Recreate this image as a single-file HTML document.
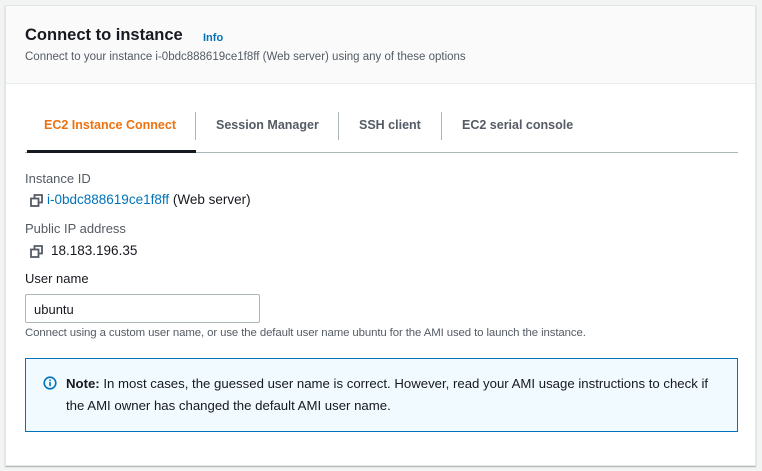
<!DOCTYPE html>
<html><head><style>
*{margin:0;padding:0;box-sizing:border-box}
body{width:762px;height:471px;background:#f2f3f3;font-family:"Liberation Sans",sans-serif;color:#16191f;position:relative;overflow:hidden}
.card{position:absolute;left:5px;top:5px;width:751px;height:461px;background:#fff;border:1px solid #e4e6e6;box-shadow:0 1px 1px rgba(0,28,36,.3)}
.hdr{position:absolute;left:0;top:0;width:100%;height:78px;background:#fafafa;border-bottom:1px solid #eaeded}
.a{position:absolute;white-space:nowrap}
.t{font-size:16.5px;font-weight:bold;left:19px;top:20px}
.info{font-size:11px;font-weight:bold;color:#0073bb;left:197px;top:26px}
.sub{font-size:11.5px;color:#545b64;left:19px;top:45px}
.tab{font-size:12.5px;font-weight:bold;color:#545b64;top:112px}
.sep{position:absolute;width:1px;height:28px;background:#aab7b8;top:106px}
.lbl{font-size:13px;color:#545b64;left:19px}
.val{font-size:13.5px;left:41px}
.ic{position:absolute;left:24px;width:13px;height:13px}
</style></head><body>
<div class="card">
<div class="hdr"></div>
<div class="a t">Connect to instance</div>
<div class="a info">Info</div>
<div class="a sub">Connect to your instance i-0bdc888619ce1f8ff (Web server) using any of these options</div>
<div class="a tab" style="left:38px;color:#ec7211">EC2 Instance Connect</div>
<div class="sep" style="left:189px"></div>
<div class="a tab" style="left:210px">Session Manager</div>
<div class="sep" style="left:332px"></div>
<div class="a tab" style="left:353px">SSH client</div>
<div class="sep" style="left:435px"></div>
<div class="a tab" style="left:456px">EC2 serial console</div>
<div style="position:absolute;left:19px;top:146px;width:713px;height:1px;background:#aab7b8"></div>
<div style="position:absolute;left:21px;top:144px;width:169px;height:3px;background:#16191f"></div>
<div class="a lbl" style="top:165px">Instance ID</div>
<svg class="ic" style="top:188px" viewBox="0 0 13 13"><rect x="1" y="4.5" width="7.5" height="7.5" fill="none" stroke="#545b64" stroke-width="1.8"/><path d="M4.5 4.5V1h7.5v7.5H8.5" fill="none" stroke="#545b64" stroke-width="1.8"/></svg>
<div class="a val" style="top:186px"><span style="color:#0073bb">i-0bdc888619ce1f8ff</span> (Web server)</div>
<div class="a lbl" style="top:215px">Public IP address</div>
<svg class="ic" style="top:239px" viewBox="0 0 13 13"><rect x="1" y="4.5" width="7.5" height="7.5" fill="none" stroke="#545b64" stroke-width="1.8"/><path d="M4.5 4.5V1h7.5v7.5H8.5" fill="none" stroke="#545b64" stroke-width="1.8"/></svg>
<div class="a val" style="top:237px;left:45px">18.183.196.35</div>
<div class="a lbl" style="top:265px;color:#16191f">User name</div>
<div style="position:absolute;left:19px;top:288px;width:235px;height:29px;border:1px solid #aab7b8;border-radius:2px"></div>
<div class="a" style="left:28px;top:296px;font-size:13px">ubuntu</div>
<div class="a" style="left:19px;top:321px;font-size:11.4px;color:#545b64;letter-spacing:-0.1px">Connect using a custom user name, or use the default user name ubuntu for the AMI used to launch the instance.</div>
<div style="position:absolute;left:19px;top:352px;width:713px;height:74px;background:#f1faff;border:1px solid #0073bb"></div>
<svg style="position:absolute;left:37px;top:370px" width="14" height="14" viewBox="0 0 14 14"><circle cx="7" cy="7" r="5.8" fill="none" stroke="#0073bb" stroke-width="1.6"/><rect x="6.2" y="6" width="1.6" height="4.2" fill="#0073bb"/><rect x="6.2" y="3.6" width="1.6" height="1.6" fill="#0073bb"/></svg>
<div class="a" style="left:60px;top:367px;font-size:13.2px;line-height:22px;color:#16191f"><b>Note:</b> In most cases, the guessed user name is correct. However, read your AMI usage instructions to check if<br>the AMI owner has changed the default AMI user name.</div>
</div>
</body></html>
